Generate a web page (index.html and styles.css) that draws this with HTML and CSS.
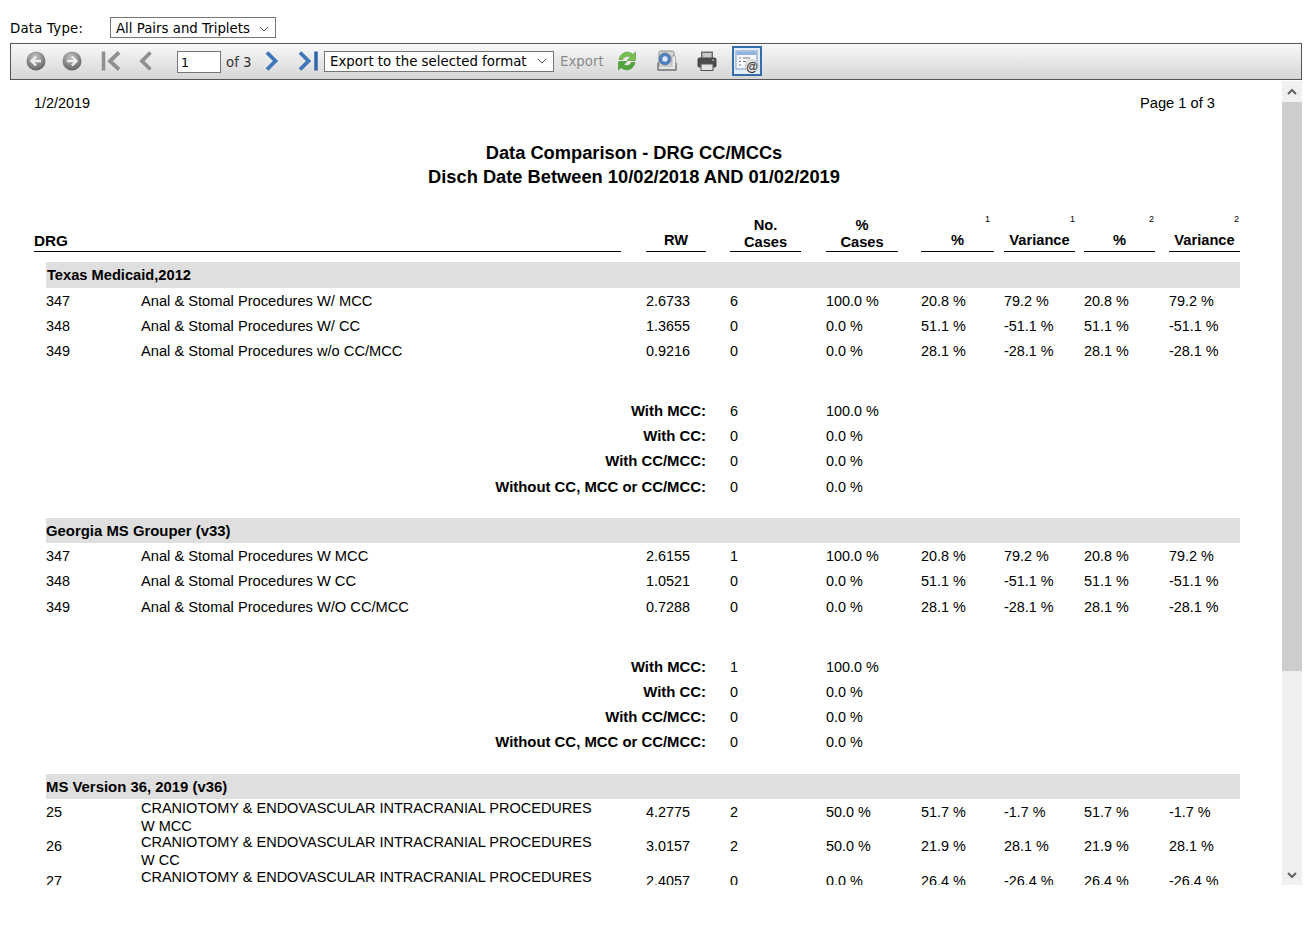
FILE: index.html
```html
<!DOCTYPE html>
<html lang="en">
<head>
  <meta charset="UTF-8" />
  <title>Data Comparison</title>
  <link rel="stylesheet" href="styles.css">
</head>
<body>
  <div class="filter-bar">
    <span class="filter-label">Data Type:</span>
    <span class="select select-type">All Pairs and Triplets<svg class="caret" viewBox="0 0 10 6"><path d="M1 1l4 4 4-4"/></svg></span>
  </div>

  <div class="toolbar">
    <svg class="tool round" viewBox="0 0 20 20"><defs><radialGradient id="ball" cx=".45" cy=".3" r=".75"><stop offset="0" stop-color="#c4c4c4"/><stop offset="1" stop-color="#5c5c5c"/></radialGradient></defs><circle cx="10" cy="10" r="9.500" fill="url(#ball)"/><path d="M15 10H6M10 5.500L5.500 10l4.500 4.500" fill="none" stroke="#eee" stroke-width="2.400"/></svg>
    <svg class="tool round" viewBox="0 0 20 20"><circle cx="10" cy="10" r="9.500" fill="url(#ball)"/><path d="M5 10h9M10 5.500l4.500 4.500-4.500 4.500" fill="none" stroke="#eee" stroke-width="2.400"/></svg>
    <svg class="tool nav first" viewBox="0 0 22 22"><path d="M2.500 1.500v19" stroke="#8f8f8f" stroke-width="3.500"/><path d="M18 2.500L9 11l9 8.500" fill="none" stroke="#8f8f8f" stroke-width="3.800"/></svg>
    <svg class="tool nav prev" viewBox="0 0 16 22"><path d="M12.500 2.500L4 11l8.500 8.500" fill="none" stroke="#8f8f8f" stroke-width="3.800"/></svg>
    <span class="page-box">1</span>
    <span class="page-of">of 3</span>
    <svg class="tool nav next" viewBox="0 0 16 22"><path d="M3 2.500L11.500 11 3 19.500" fill="none" stroke="#3f76b8" stroke-width="3.800"/></svg>
    <svg class="tool nav last" viewBox="0 0 22 22"><path d="M2 2.500L10.500 11 2 19.500" fill="none" stroke="#3f76b8" stroke-width="3.800"/><path d="M18 1.500v19" stroke="#2f65a8" stroke-width="3.500"/></svg>
    <span class="select select-export">Export to the selected format<svg class="caret" viewBox="0 0 10 6"><path d="M1 1l4 4 4-4"/></svg></span>
    <span class="export-link">Export</span>
    <svg class="tool refresh" viewBox="0 0 22 22"><path d="M3 9.500C4 4.500 8 1.800 12 2.200c2.200.2 3.800 1.100 4.800 2.300L19.500 2v8.500H11l3.200-3C12.500 5.500 7.500 6 6.800 9.500z" fill="#79bd4f" stroke="#4f9a35" stroke-width=".6"/><path d="M19 12.500c-1 5-5 7.700-9 7.300-2.200-.2-3.800-1.100-4.800-2.300L2.500 20v-8.500H11l-3.200 3c1.700 2 6.700 1.500 7.400-2z" fill="#4fa53a" stroke="#3f8f30" stroke-width=".6"/></svg>
    <svg class="tool search" viewBox="0 0 22 22"><rect x="1" y="12" width="20" height="9" rx="1.500" fill="#8c8c8c"/><rect x="3" y="1" width="15" height="16" rx="1.500" fill="#d4d4d4" stroke="#8a8a8a"/><circle cx="9" cy="9" r="6" fill="#4c82c4" stroke="#6a7f99"/><circle cx="9" cy="9" r="2.700" fill="#dfeaf6"/><rect x="16" y="6" width="3.500" height="11" fill="#f0f0f0" stroke="#8a8a8a" stroke-width=".6"/><rect x="3" y="16.500" width="16" height="2.500" fill="#e4e4e4"/></svg>
    <svg class="tool print" viewBox="0 0 22 22"><rect x="5" y="1.500" width="12" height="7" fill="#6b6b6b"/><rect x="6.500" y="3" width="9" height="5" fill="#c9c9c9"/><rect x="1.500" y="7.500" width="19" height="10" rx="2" fill="#4a4a4a"/><rect x="5" y="14" width="12" height="6.500" fill="#e2e2e2" stroke="#555"/><rect x="16" y="9.500" width="2.500" height="1.500" fill="#9c9c9c"/></svg>
    <span class="tool-active">
      <svg viewBox="0 0 24 24"><rect x="1" y="2" width="21" height="18" fill="#f4f7fb" stroke="#7f9fc4"/><rect x="1.500" y="2.500" width="20" height="3.500" fill="#8fb4de"/><path d="M4 9h2M8 9h7M4 12.500h2M8 12.500h3M4 16h2" stroke="#777" stroke-width="1"/><circle cx="17" cy="17" r="6.500" fill="#e2e2e2" stroke="#aaa" stroke-width=".5"/><text class="at-sign" x="17" y="21.500" text-anchor="middle">@</text></svg>
    </span>
  </div>

  <div class="viewer">
    <div class="report">
      <div class="report-top"><span>1/2/2019</span><span class="page-no">Page 1 of 3</span></div>
      <div class="report-title">Data Comparison - DRG CC/MCCs<br>Disch Date Between 10/02/2018 AND 01/02/2019</div>

      <div class="head-row">
        <div class="hd hd-drg single">DRG</div>
        <div class="hd hd-rw single">RW</div>
        <div class="hd hd-no">No.<br>Cases</div>
        <div class="hd hd-pct">%<br>Cases</div>
        <div class="hd hd-a single"><sup>1</sup>%</div>
        <div class="hd hd-b single"><sup>1</sup>Variance</div>
        <div class="hd hd-c single"><sup>2</sup>%</div>
        <div class="hd hd-d single"><sup>2</sup>Variance</div>
      </div>

      <div class="group first-group">Texas Medicaid,2012</div>
      <div class="row"><span>347</span><span>Anal &amp; Stomal Procedures W/ MCC</span><span>2.6733</span><span>6</span><span>100.0 %</span><span>20.8 %</span><span>79.2 %</span><span>20.8 %</span><span>79.2 %</span></div>
      <div class="row"><span>348</span><span>Anal &amp; Stomal Procedures W/ CC</span><span>1.3655</span><span>0</span><span>0.0 %</span><span>51.1 %</span><span>-51.1 %</span><span>51.1 %</span><span>-51.1 %</span></div>
      <div class="row"><span>349</span><span>Anal &amp; Stomal Procedures w/o CC/MCC</span><span>0.9216</span><span>0</span><span>0.0 %</span><span>28.1 %</span><span>-28.1 %</span><span>28.1 %</span><span>-28.1 %</span></div>
      <div class="summary">
        <div class="sum-row"><b>With MCC:</b><span>6</span><span>100.0 %</span></div>
        <div class="sum-row"><b>With CC:</b><span>0</span><span>0.0 %</span></div>
        <div class="sum-row"><b>With CC/MCC:</b><span>0</span><span>0.0 %</span></div>
        <div class="sum-row nudge"><b>Without CC, MCC or CC/MCC:</b><span>0</span><span>0.0 %</span></div>
      </div>

      <div class="group">Georgia MS Grouper (v33)</div>
      <div class="row"><span>347</span><span>Anal &amp; Stomal Procedures W MCC</span><span>2.6155</span><span>1</span><span>100.0 %</span><span>20.8 %</span><span>79.2 %</span><span>20.8 %</span><span>79.2 %</span></div>
      <div class="row"><span>348</span><span>Anal &amp; Stomal Procedures W CC</span><span>1.0521</span><span>0</span><span>0.0 %</span><span>51.1 %</span><span>-51.1 %</span><span>51.1 %</span><span>-51.1 %</span></div>
      <div class="row nudge"><span>349</span><span>Anal &amp; Stomal Procedures W/O CC/MCC</span><span>0.7288</span><span>0</span><span>0.0 %</span><span>28.1 %</span><span>-28.1 %</span><span>28.1 %</span><span>-28.1 %</span></div>
      <div class="summary">
        <div class="sum-row"><b>With MCC:</b><span>1</span><span>100.0 %</span></div>
        <div class="sum-row"><b>With CC:</b><span>0</span><span>0.0 %</span></div>
        <div class="sum-row"><b>With CC/MCC:</b><span>0</span><span>0.0 %</span></div>
        <div class="sum-row"><b>Without CC, MCC or CC/MCC:</b><span>0</span><span>0.0 %</span></div>
      </div>

      <div class="group">MS Version 36, 2019 (v36)</div>
      <div class="row tall"><span>25</span><span class="long">CRANIOTOMY &amp; ENDOVASCULAR INTRACRANIAL PROCEDURES W MCC</span><span>4.2775</span><span>2</span><span>50.0 %</span><span>51.7 %</span><span>-1.7 %</span><span>51.7 %</span><span>-1.7 %</span></div>
      <div class="row tall"><span>26</span><span class="long">CRANIOTOMY &amp; ENDOVASCULAR INTRACRANIAL PROCEDURES W CC</span><span>3.0157</span><span>2</span><span>50.0 %</span><span>21.9 %</span><span>28.1 %</span><span>21.9 %</span><span>28.1 %</span></div>
      <div class="row tall"><span>27</span><span class="long">CRANIOTOMY &amp; ENDOVASCULAR INTRACRANIAL PROCEDURES W/O CC/MCC</span><span>2.4057</span><span>0</span><span>0.0 %</span><span>26.4 %</span><span>-26.4 %</span><span>26.4 %</span><span>-26.4 %</span></div>
    </div>
    <div class="scrollbar">
      <svg class="arrow" viewBox="0 0 10 6"><path d="M1 5l4-4 4 4"/></svg>
      <div class="thumb"></div>
      <div class="track"></div>
      <svg class="arrow" viewBox="0 0 10 6"><path d="M1 1l4 4 4-4"/></svg>
    </div>
  </div>
</body>
</html>
```

FILE: styles.css
```css
* { box-sizing: border-box; }
html, body { height: 100%; }
body {
  margin: 0;
  padding: 17px 10px 0;
  background: #fff;
  color: #000;
  font-family: "Liberation Sans", Arial, sans-serif;
  overflow: hidden;
}

.filter-bar {
  display: flex;
  align-items: center;
  height: 21px;
  margin-bottom: 5px;
  font-family: "DejaVu Sans", Verdana, sans-serif;
  font-size: 13.33px;
}
.filter-label { width: 100px; padding-top: 2px; letter-spacing: .2px; }

.select {
  display: flex;
  align-items: center;
  justify-content: space-between;
  height: 21px;
  padding: 0 6px 0 5px;
  background: #fff;
  border: 1px solid #767676;
  font-family: "DejaVu Sans", Verdana, sans-serif;
  font-size: 13.33px;
  white-space: nowrap;
}
.select-type { width: 166px; padding-top: 2px; }
.select-export { width: 230px; margin-left: 4px; }
.caret {
  flex: none;
  width: 10px;
  height: 6px;
  fill: none;
  stroke: #555;
  stroke-width: 1;
}

.toolbar {
  display: flex;
  align-items: center;
  width: 1292px;
  height: 37px;
  padding: 0 0 1px 15px;
  background: linear-gradient(#f8f8f8, #d6d6d6);
  border: 1px solid #555;
  font-family: "DejaVu Sans", Verdana, sans-serif;
  font-size: 13.33px;
}
.tool { flex: none; filter: blur(.35px); }
.round { width: 20px; height: 20px; margin-right: 16px; }
.first { width: 22px; height: 22px; margin-left: 3px; }
.prev { width: 16px; height: 22px; margin-left: 15px; }
.page-box {
  width: 44px;
  height: 22px;
  margin: 2px 0 0 23px;
  padding: 3px 3px 0;
  background: #fff;
  border: 1px solid #767676;
  font-size: 12.5px;
}
.page-of { width: 35px; margin-left: 5px; padding-top: 2px; color: #333; }
.next { width: 16px; height: 22px; margin-left: 3px; }
.last { width: 22px; height: 22px; margin-left: 18px; }
.export-link { width: 55px; margin-left: 6px; color: #8a8a8a; }
.refresh { width: 22px; height: 22px; margin-left: 1px; }
.search { width: 22px; height: 22px; margin-left: 18px; }
.print { width: 22px; height: 22px; margin-left: 18px; }
.tool-active {
  display: flex;
  align-items: center;
  justify-content: center;
  width: 30px;
  height: 30px;
  margin-left: 14px;
  background: #e3edf7;
  border: 2px solid #336ea8;
}
.tool-active svg { width: 24px; height: 24px; }
.at-sign { font-family: "Liberation Sans", sans-serif; font-size: 12px; font-weight: 700; fill: #333; }

.viewer {
  display: flex;
  width: 1292px;
  height: 804px;
  margin-top: 1px;
  overflow: hidden;
}
.report {
  width: 1272px;
  padding: 0 0 0 24px;
  font-size: 14.67px;
  overflow: hidden;
}
.report-top {
  display: flex;
  justify-content: space-between;
  width: 1181px;
  height: 52px;
  padding-top: 14px;
}
.report-top span:first-child { font-size: 14.4px; }
.report-title {
  width: 1200px;
  height: 72px;
  padding-top: 8px;
  text-align: center;
  font-size: 18.3px;
  font-weight: 700;
  line-height: 24px;
}

.head-row {
  display: flex;
  height: 47px;
  font-weight: 700;
}
.hd {
  position: relative;
  display: flex;
  flex-direction: column;
  justify-content: flex-end;
  flex: none;
  line-height: 17px;
  text-align: center;
  border-bottom: 1px solid #000;
}
.single { padding-bottom: 2px; }
.hd sup {
  position: absolute;
  top: 9px;
  right: 0;
  font-size: 9px;
  font-weight: 400;
  line-height: 10px;
}
.hd-drg { width: 587px; font-size: 15.3px; text-align: left; }
.hd-rw { width: 60px; margin-left: 25px; }
.hd-no { width: 71px; margin-left: 24px; }
.hd-pct { width: 72px; margin-left: 25px; }
.hd-a { width: 73px; margin-left: 23px; }
.hd-a sup { right: 4px; }
.hd-b { width: 71px; margin-left: 10px; }
.hd-c { width: 71px; margin-left: 9px; }
.hd-c sup { right: 1px; }
.hd-d { width: 71px; margin-left: 14px; }
.hd-d sup { right: 1px; }

.group {
  display: flex;
  align-items: center;
  width: 1194px;
  height: 25px;
  margin-left: 12px;
  background: #dfdfdf;
  font-size: 14.9px;
  font-weight: 700;
}
.first-group { height: 26px; margin-top: 10px; padding-left: 1px; font-size: 14.67px; }

.row {
  display: grid;
  grid-template-columns: 95px 505px 84px 96px 95px 83px 80px 85px 71px;
  align-items: center;
  width: 1194px;
  height: 25px;
  margin-left: 12px;
  font-size: 14.4px;
}
.row span:nth-child(2) { font-size: 14.67px; }
.row.nudge { height: 26px; padding-top: 1px; }
.row.tall { align-items: start; height: 34px; line-height: 18px; }
.row.tall + .row.tall { height: 35px; }
.row.tall span { padding-top: 4px; }
.row.tall .long { padding: 0 45px 0 0; font-size: 14.5px; }

.summary { padding: 35px 0 19px 12px; }
.sum-row {
  display: grid;
  grid-template-columns: 684px 96px 100px;
  align-items: center;
  height: 25px;
}
.sum-row:last-child { height: 26px; }
.sum-row.nudge { padding-top: 1px; }
.sum-row b { padding-right: 24px; font-size: 14.9px; text-align: right; }
.sum-row span { font-size: 14.4px; }

.scrollbar {
  display: flex;
  flex-direction: column;
  flex: none;
  width: 20px;
  background: #f0f0f0;
}
.arrow {
  flex: none;
  width: 10px;
  height: 6px;
  margin: 8px 5px 7px;
  fill: none;
  stroke: #606060;
  stroke-width: 2;
}
.thumb { height: 569px; background: #cdcdcd; }
.track { flex: 1; }
```
